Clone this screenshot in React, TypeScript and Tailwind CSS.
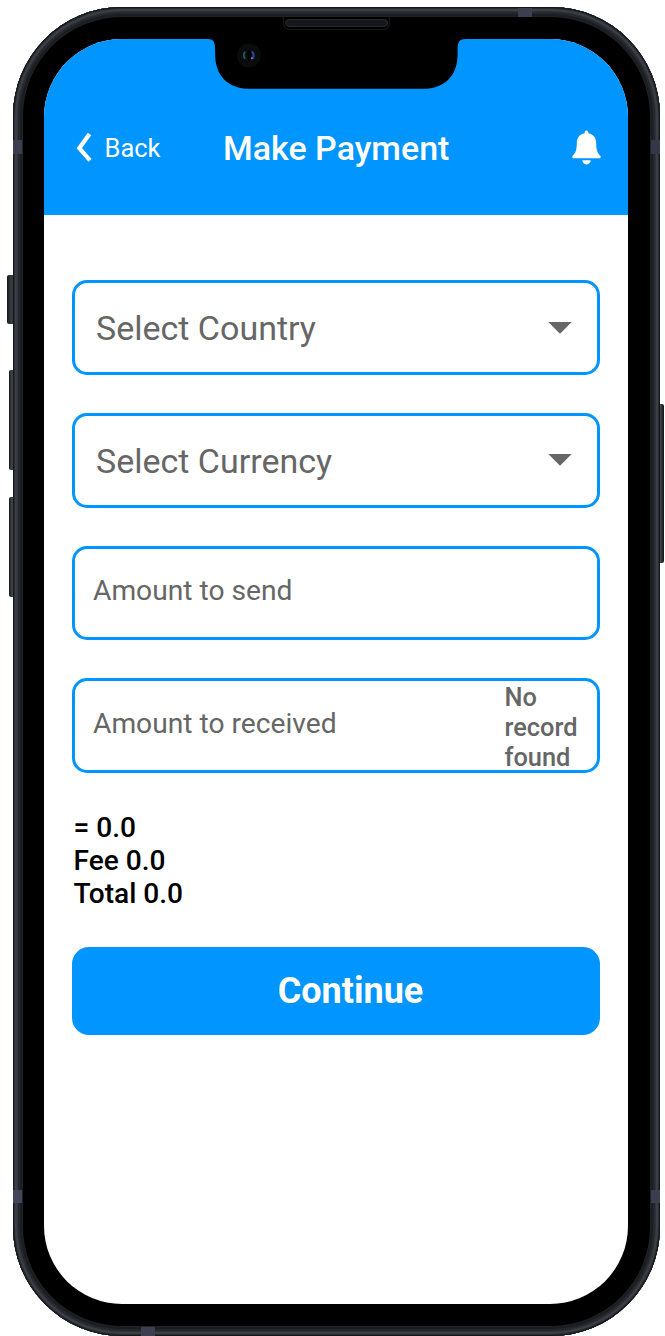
import React from "react";

const font = "font-['Roboto',sans-serif]";

function Chevron() {
  return (
    <svg className="h-[29px] w-[16px]" viewBox="0 0 16 29" fill="none">
      <path d="M13.500 1 3.300 15.200 14 27.400" stroke="white" strokeWidth="4.200" />
    </svg>
  );
}

function Bell() {
  return (
    <svg className="h-[35px] w-[29px]" viewBox="0 0 29 35" fill="white">
      <path d="M14.5.5c1.1 0 1.8.8 1.9 2.7 4.9 1 7.8 4.300 7.800 10.100 0 7.500 1.500 9.700 4.100 12.400.9 1.300.3 2.600-1.200 2.600H1.900C.4 28.300-.2 27 .7 25.700c2.600-2.700 4.100-4.900 4.100-12.400 0-5.800 2.900-9.100 7.800-10.100.1-1.900.8-2.700 1.900-2.700ZM10.200 30.300h8.600c-.4 2.600-2 4.100-4.300 4.100s-3.900-1.500-4.300-4.100Z" />
    </svg>
  );
}

function Caret() {
  return (
    <svg className="h-[12px] w-[24px]" viewBox="0 0 24 12" fill="#666666">
      <path d="M.3 0h23.400L12 11.700Z" />
    </svg>
  );
}

function Notch() {
  return (
    <svg className="absolute left-[164px] top-0 h-[60px] w-[258px]" viewBox="0 0 258 60">
      <path d="M0 0v.1c6 0 7.100 3.900 7.100 10.900v4c0 21 12 34.800 35 34.800h172.500c23 0 35-13.800 35-34.800v-4c0-7 1.100-10.900 7.900-10.900V0Z" fill="black" />
      <circle cx="41" cy="16.500" r="12" fill="#0a0b0b" />
      <circle cx="41" cy="16.500" r="5.800" fill="#0d1825" />
      <path d="M37 12.700q-2.500 3.500 0 7" stroke="#28645f" strokeWidth="1.500" fill="none" />
      <path d="M44 12.500q3 3.500 .5 7.500" stroke="#2b4699" strokeWidth="2" fill="none" />
      <circle cx="43.700" cy="19" r="1" fill="#a7b3df" />
      <ellipse cx="41" cy="16.500" rx="2.700" ry="5.500" fill="black" />
    </svg>
  );
}

function Select({ label }: { label: string }) {
  return (
    <button className="flex h-[94.7px] w-full items-center justify-between rounded-[15px] border-[3px] border-[#0095ff] pl-[21px] pr-[25px] text-[34px] text-[#666666]">
      <span className="pt-[2px]">{label}</span>
      <Caret />
    </button>
  );
}

export default function App() {
  return (
    <div className={`relative h-[1336px] w-[665px] overflow-hidden bg-white pl-[13px] pt-[7px] ${font}`}>
      <div className="absolute left-[7px] top-[275px] h-[49px] w-[8px] rounded-[2px] bg-linear-to-r from-[#15191c] via-[#3b3f44] to-[#24282b]" />
      <div className="absolute left-[9px] top-[370px] h-[100px] w-[6px] rounded-[2px] bg-linear-to-r from-[#15191c] via-[#43474c] to-[#24282b]" />
      <div className="absolute left-[9px] top-[497px] h-[100px] w-[6px] rounded-[2px] bg-linear-to-r from-[#15191c] via-[#43474c] to-[#24282b]" />
      <div className="absolute left-[657px] top-[404px] h-[159px] w-[7px] rounded-[2px] bg-linear-to-r from-[#101315] via-[#3f4347] to-[#14181b]" />
      <div className="relative h-[1328.5px] w-[647px] overflow-hidden rounded-[109px] bg-black px-[31px] pb-[32px] pt-[32px] shadow-[inset_0_0_0_1px_#16191c,inset_0_0_0_2px_#292d31,inset_0_0_0_4px_#3b3f45,inset_0_0_0_5px_#30343a,inset_0_0_0_7px_#24282d,inset_0_0_0_9px_#1a1d21,inset_0_0_0_10px_#202225]">
        <div className="absolute left-0 top-[133px] h-[14px] w-[9px] bg-[#3c3d4e]" />
        <div className="absolute right-0 top-[133px] h-[14px] w-[9px] bg-[#353647]" />
        <div className="absolute left-0 top-[1183px] h-[13px] w-[9px] bg-[#44455a]" />
        <div className="absolute right-0 top-[1183px] h-[13px] w-[9px] bg-[#3c3d4e]" />
        <div className="absolute left-[505px] top-[1px] h-[9px] w-[14px] bg-[#3d3e50]" />
        <div className="absolute bottom-0 left-[128px] h-[9px] w-[14px] bg-[#3d3e50]" />
        <div className="absolute left-[270px] top-[10px] h-[13px] w-[107px] rounded-b-[7px] border border-t-0 border-[#17191b] bg-black px-[1px] pt-[2px]">
          <div className="h-[8px] rounded-[4px] border border-[#292b2e] bg-[#15171a]" />
        </div>
        <main className="relative h-[1264.5px] w-[584px] overflow-hidden rounded-[78px] bg-white">
          <header className="flex h-[176.3px] items-center bg-[#0095ff] pl-[32px] pr-[27px] pt-[41px] text-white">
            <button className="flex w-[147px] items-center gap-[12.500px] text-[25.5px]">
              <Chevron />
              <span className="pt-px">Back</span>
            </button>
            <h1 className="grow whitespace-nowrap pt-px text-[34px] font-medium">Make Payment</h1>
            <Bell />
          </header>
          <Notch />
          <form className="flex flex-col gap-[38px] px-[28px] pt-[65px]">
            <Select label="Select Country" />
            <Select label="Select Currency" />
            <label className="flex h-[94.7px] items-center rounded-[15px] border-[3px] border-[#0095ff] pb-[4px] pl-[18px] text-[28.2px] text-[#666666]">Amount to send</label>
            <label className="flex h-[94.7px] items-center justify-between rounded-[15px] border-[3px] border-[#0095ff] pl-[18px] pr-[18.5px] text-[28.2px] text-[#666666]">
              <span className="pb-[4px]">Amount to received</span>
              <span className="w-[74px] pt-[2px] text-[25.4px] font-medium leading-[30px]">No record found</span>
            </label>
            <div className="pl-[1.5px] text-[28.1px] font-medium leading-[33px] text-black">
              <p>= 0.0</p>
              <p>Fee 0.0</p>
              <p>Total 0.0</p>
            </div>
            <button className="-mt-px h-[87.5px] rounded-[17px] bg-[#0095ff] pl-[29px] text-[36px] font-bold text-white">Continue</button>
          </form>
        </main>
      </div>
    </div>
  );
}
